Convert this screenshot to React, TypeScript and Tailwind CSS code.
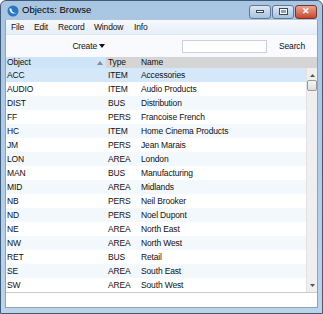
const rows: [string, string, string][] = [
  ["ACC", "ITEM", "Accessories"],
  ["AUDIO", "ITEM", "Audio Products"],
  ["DIST", "BUS", "Distribution"],
  ["FF", "PERS", "Francoise French"],
  ["HC", "ITEM", "Home Cinema Products"],
  ["JM", "PERS", "Jean Marais"],
  ["LON", "AREA", "London"],
  ["MAN", "BUS", "Manufacturing"],
  ["MID", "AREA", "Midlands"],
  ["NB", "PERS", "Neil Brooker"],
  ["ND", "PERS", "Noel Dupont"],
  ["NE", "AREA", "North East"],
  ["NW", "AREA", "North West"],
  ["RET", "BUS", "Retail"],
  ["SE", "AREA", "South East"],
  ["SW", "AREA", "South West"],
]

function App() {
  return (
    <div className="w-[323px] h-[314px] bg-white">
      <div className="flex flex-col w-[323px] h-[314px] bg-gradient-to-b from-[#a9c5e2] to-[#bcd3ea] border border-[#3d5c7a] rounded-t-[6px] font-['Liberation_Sans',sans-serif] text-[8.5px] tracking-[-0.15px] text-[#111]">
        <TitleBar />
        <div className="flex flex-col flex-1 mx-[4px] mb-[5px] bg-white border border-t-0 border-[#8aa4c0]">
          <div className="flex items-center h-[14px] pl-[5px] bg-gradient-to-b from-[#f6f9fd] to-[#e6eef8] leading-none">
            <span className="w-[23px]">File</span>
            <span className="w-[24px]">Edit</span>
            <span className="w-[36px]">Record</span>
            <span className="w-[40px]">Window</span>
            <span>Info</span>
          </div>
          <div className="flex items-center h-[23px] bg-[#f8fafd] border-t border-[#dfe7f1]">
            <div className="flex items-center w-[99px] justify-end gap-[2px]">
              <span>Create</span>
              <svg width="6" height="4" viewBox="0 0 6 4"><path d="M0 0h6L3 4z" fill="#111" /></svg>
            </div>
            <div className="ml-[77px] w-[85px] h-[13px] bg-white border border-[#c9d0d9]" />
            <span className="ml-[12px]">Search</span>
          </div>
          <div className="flex h-[11px] items-center leading-none bg-[#d5d5d5]">
            <div className="flex items-center w-[100px] h-full bg-[#cde4f9] pl-[1px]">
              <span className="flex-1">Object</span>
              <svg width="6" height="4" viewBox="0 0 6 4" className="mr-[3px]"><path d="M0 4h6L3 0z" fill="#8a8a8a" /></svg>
            </div>
            <span className="w-[35px] pl-[2px]">Type</span>
            <span>Name</span>
          </div>
          <div className="flex">
            <div className="flex flex-col flex-1">
              {rows.map((r, i) => (
                <div
                  key={r[0]}
                  className={`flex items-center h-[14px] leading-none ${i === 0 ? "bg-[#d5e8f9]" : i % 2 === 1 ? "bg-white" : "bg-[#f3f8fd]"}`}
                >
                  <span className="w-[100px] pl-[1px]">{r[0]}</span>
                  <span className="w-[35px] pl-[2px]">{r[1]}</span>
                  <span>{r[2]}</span>
                </div>
              ))}
            </div>
            <div className="relative w-[11px] bg-[#efefef] border-l border-[#e2e2e2]">
              <svg width="5" height="3" viewBox="0 0 5 3" className="absolute left-[3px] top-[6px]"><path d="M0 3h5L2.5 0z" fill="#555" /></svg>
              <div className="absolute left-[0px] top-[12px] w-[10px] h-[11px] bg-gradient-to-b from-[#f6f6f6] to-[#dedede] border border-[#9a9a9a] rounded-[2px]" />
              <svg width="5" height="3" viewBox="0 0 5 3" className="absolute left-[3px] bottom-[5px]"><path d="M0 0h5L2.5 3z" fill="#555" /></svg>
            </div>
          </div>
          <div className="flex-1 border-t border-[#cbcbcb] bg-white" />
        </div>
      </div>
    </div>
  )
}

function TitleBar() {
  return (
    <div className="flex items-center h-[19px] pl-[6px] pr-[5px]">
      <svg width="12" height="12" viewBox="0 0 12 12" className="mr-[3px]">
        <circle cx="6" cy="6" r="5.5" fill="#2a78c0" />
        <path d="M2.5 3.5c0 4 3 6 7 4.5-3 .3-5.2-1.8-5.2-4.6z" fill="#fff" />
      </svg>
      <span className="flex-1 text-[9.5px] tracking-normal text-black">Objects: Browse</span>
      <div className="flex gap-[1px] mt-[2px]">
        <WinButton>
          <div className="w-[8px] h-[3px] bg-white border border-[#3a4a5a]" />
        </WinButton>
        <WinButton>
          <div className="w-[9px] h-[7px] border border-[#3a4a5a] bg-white p-[1px]"><div className="w-full h-full bg-[#8aa4c2]" /></div>
        </WinButton>
        <div className="flex items-center justify-center w-[22px] h-[14px] rounded-[3px] bg-gradient-to-b from-[#e8a293] to-[#c8452c] border border-[#7a3322]">
          <span className="text-[9px] font-bold text-white leading-none">✕</span>
        </div>
      </div>
    </div>
  )
}

function WinButton({children}: {children: React.ReactNode}) {
  return (
    <div className="flex items-center justify-center w-[22px] h-[14px] rounded-[3px] bg-gradient-to-b from-[#dde8f4] to-[#a9c1dc] border border-[#5f7896]">
      {children}
    </div>
  )
}

export default App
